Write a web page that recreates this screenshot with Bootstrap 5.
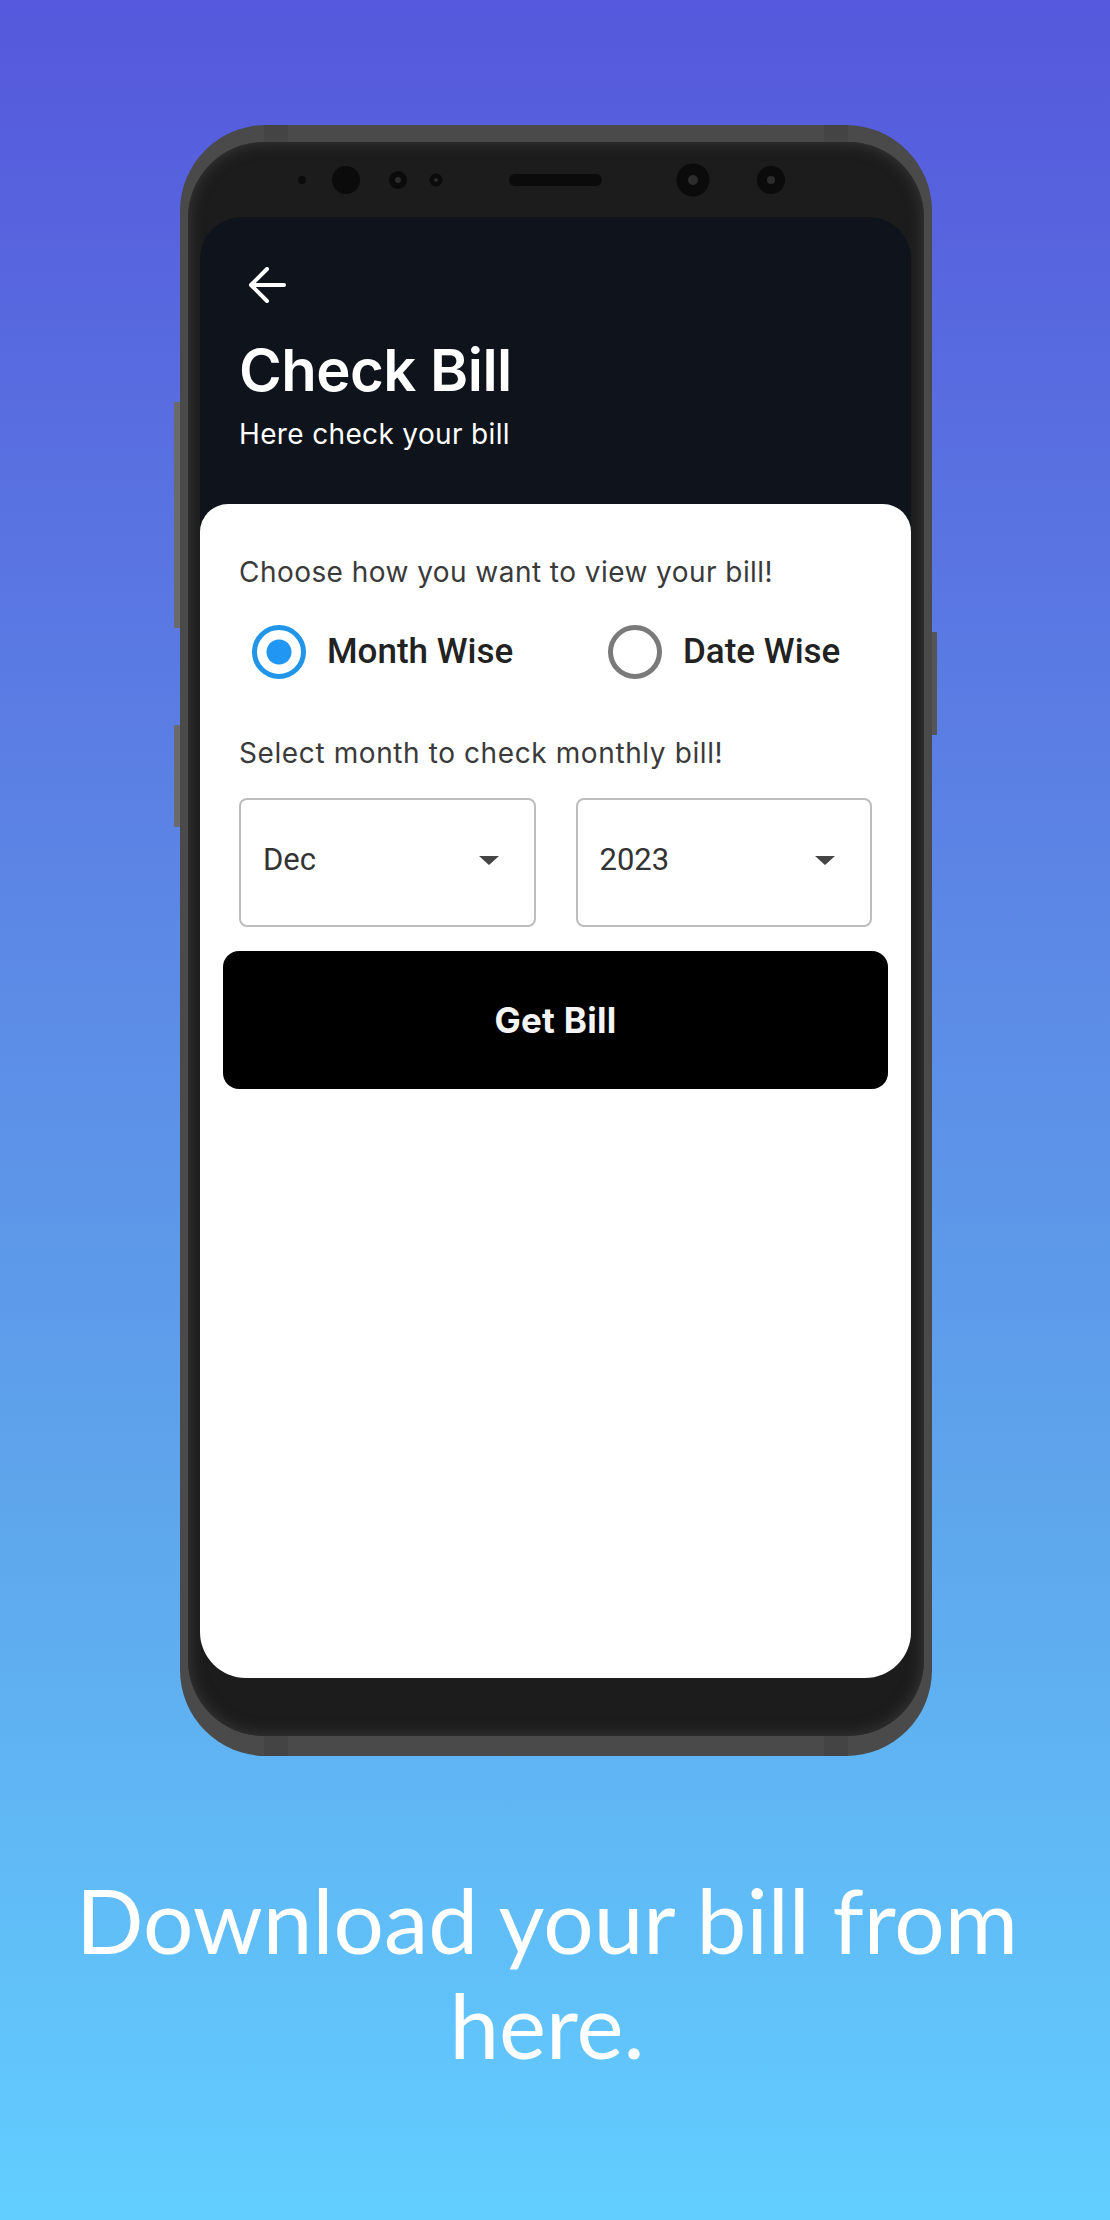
<!DOCTYPE html>
<html lang="en">
<head>
  <meta charset="UTF-8" />
  <meta name="viewport" content="width=device-width, initial-scale=1" />
  <title>Check Bill</title>
  <link href="https://cdn.jsdelivr.net/npm/bootstrap@5.3.0/dist/css/bootstrap.min.css" rel="stylesheet" />
  <style>
    body {
      height: 2220px;
      overflow: hidden;
      background: linear-gradient(180deg, #5558dc 0%, #5b80e4 35%, #5ea6ec 68%, #62ceff 100%);
      font-family: "Inter", sans-serif;
    }
    .promo-page { padding: 125px 0 0 180px; }
    .phone-rim {
      position: relative;
      width: 752px;
      height: 1631px;
      padding: 17px 8px 20px;
      border-radius: 86px;
      background: #4a4a4a;
    }
    .side-key { position: absolute; background: #6a6a6a; border-radius: 1px; }
    .key-a { left: -6px; top: 277px; width: 6px; height: 226px; }
    .key-b { left: -6px; top: 600px; width: 6px; height: 102px; }
    .key-c { right: -5px; top: 507px; width: 5px; height: 103px; background: #555; }
    .rim-notch { position: absolute; width: 24px; background: #444; }
    .notch-tl { left: 84px; top: 0; height: 17px; }
    .notch-tr { right: 84px; top: 0; height: 17px; }
    .notch-bl { left: 84px; bottom: 0; height: 20px; }
    .notch-br { right: 84px; bottom: 0; height: 20px; }
    .phone-body {
      height: 100%;
      padding: 75px 13px 58px 12px;
      border-radius: 76px;
      background: #1c1c1c;
      box-shadow: inset 0 0 16px #3c3c3c;
    }
    .sensor-strip { position: absolute; left: 0; top: 17px; width: 752px; height: 75px; }
    .phone-screen {
      display: flex;
      flex-direction: column;
      height: 100%;
      border-radius: 42px 42px 46px 46px;
      background: #0f131b;
      overflow: hidden;
    }
    .app-head { height: 287px; padding: 50px 0 0 39px; color: #fff; }
    .back-arrow { display: block; width: 38px; height: 36px; margin-left: 9px; }
    .app-title {
      margin: 37px 0 0;
      font-size: 58px;
      line-height: 60px;
      font-weight: 600;
      letter-spacing: -.5px;
    }
    .app-sub { margin: 18px 0 0; font-size: 28px; line-height: 32px; letter-spacing: .35px; }
    .app-sheet {
      flex: 1;
      padding: 50px 22px 0 23px;
      border-radius: 28px 28px 0 0;
      background: #fff;
    }
    .sheet-hint {
      margin: 0 0 0 16px;
      font-size: 28px;
      line-height: 36px;
      letter-spacing: .45px;
      color: #3a3a3a;
    }
    .view-options { height: 78px; margin: 23px 0 0 29px; }
    .view-option { flex: none; width: 356px; gap: 21px; }
    .view-option .form-check-input {
      flex: none;
      width: 54px;
      height: 54px;
      margin: 0;
      border: 5px solid #7a7a7a;
      background: #fff;
    }
    .view-option .form-check-input:checked {
      border-color: #2196e8;
      background: radial-gradient(circle, #2196f3 0 12px, #fff 13px);
    }
    .view-option label {
      font-family: "Roboto", sans-serif;
      font-size: 35px;
      font-weight: 500;
      color: #222;
    }
    .hint-gap { margin-top: 44px; }
    .hint-gap { letter-spacing: .6px; }
    .period-row { gap: 40px; margin: 27px 0 0 16px; width: 633px; }
    .period-box {
      flex: 1;
      height: 129px;
      padding: 0 35px 4px 22px;
      border: 2px solid #bdbdbd;
      border-radius: 8px;
      font-family: "Roboto", sans-serif;
      font-size: 31px;
      color: #333;
    }
    .caret-down {
      width: 0;
      height: 0;
      border-left: 10px solid transparent;
      border-right: 10px solid transparent;
      border-top: 9px solid #444;
    }
    .get-bill {
      display: block;
      width: 665px;
      height: 138px;
      margin-top: 24px;
      border: 0;
      border-radius: 16px;
      background: #000;
      color: #f4f4f4;
      font-size: 35px;
      font-weight: 700;
      letter-spacing: .3px;
    }
    .promo-caption {
      width: 1094px;
      margin: 111px 0 0 -180px;
      font-family: "Lato", sans-serif;
      font-size: 89px;
      line-height: 105px;
      color: #fff;
      text-align: center;
    }
  </style>
</head>
<body>
  <div class="promo-page">
    <div class="phone-rim">
      <span class="side-key key-a"></span>
      <span class="side-key key-b"></span>
      <span class="side-key key-c"></span>
      <span class="rim-notch notch-tl"></span>
      <span class="rim-notch notch-tr"></span>
      <span class="rim-notch notch-bl"></span>
      <span class="rim-notch notch-br"></span>
      <div class="phone-body">
        <div class="phone-screen">
          <div class="app-head">
            <svg class="back-arrow" viewBox="0 0 38 36" fill="none" stroke="#fff" stroke-width="4" stroke-linecap="round" stroke-linejoin="round"><path d="M36 18H3M19 2 3 18l16 16"/></svg>
            <h1 class="app-title">Check Bill</h1>
            <p class="app-sub">Here check your bill</p>
          </div>
          <div class="app-sheet">
            <p class="sheet-hint">Choose how you want to view your bill!</p>
            <div class="view-options d-flex align-items-center">
              <div class="view-option d-flex align-items-center">
                <input class="form-check-input" type="radio" name="viewBy" id="monthWise" checked />
                <label for="monthWise">Month Wise</label>
              </div>
              <div class="view-option d-flex align-items-center">
                <input class="form-check-input" type="radio" name="viewBy" id="dateWise" />
                <label for="dateWise">Date Wise</label>
              </div>
            </div>
            <p class="sheet-hint hint-gap">Select month to check monthly bill!</p>
            <div class="period-row d-flex">
              <div class="period-box d-flex align-items-center justify-content-between">Dec<span class="caret-down"></span></div>
              <div class="period-box d-flex align-items-center justify-content-between">2023<span class="caret-down"></span></div>
            </div>
            <button type="button" class="get-bill">Get Bill</button>
          </div>
        </div>
      </div>
      <svg class="sensor-strip" viewBox="0 0 752 75">
        <g fill="#0b0b0b">
          <circle cx="122" cy="38" r="4"/>
          <circle cx="166" cy="38" r="14"/>
          <circle cx="218" cy="38" r="9"/>
          <circle cx="256" cy="38" r="6.5"/>
          <rect x="329" y="32" width="93" height="12" rx="6"/>
          <circle cx="513" cy="38" r="16.5"/>
          <circle cx="591" cy="38" r="14"/>
        </g>
        <g fill="#2c2c2c">
          <circle cx="218" cy="38" r="3"/>
          <circle cx="256" cy="38" r="2"/>
          <circle cx="513" cy="38" r="5"/>
          <circle cx="591" cy="38" r="4"/>
        </g>
      </svg>
    </div>
    <p class="promo-caption">Download your bill from here.</p>
  </div>
  <script src="https://cdn.jsdelivr.net/npm/bootstrap@5.3.0/dist/js/bootstrap.bundle.min.js"></script>
</body>
</html>
